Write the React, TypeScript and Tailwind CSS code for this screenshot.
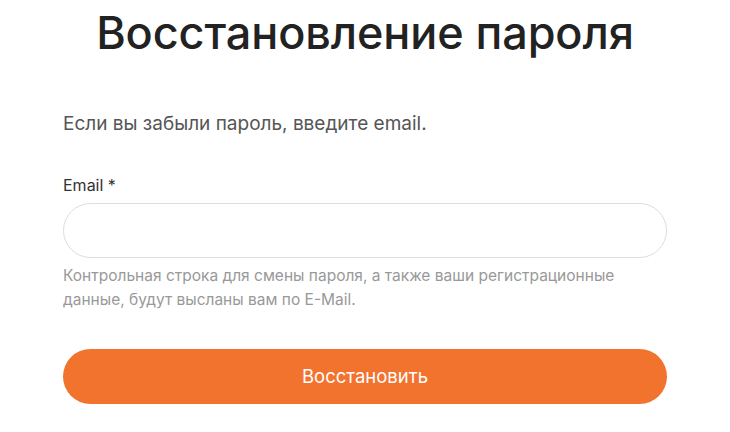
import React from "react";

export default function App() {
  return (
    <div className="w-[730px] h-[432px] bg-white overflow-hidden" style={{ fontFamily: "Inter, 'Noto Sans', sans-serif" }}>
      <div className="w-[604px] mx-auto">
        <h1 className="text-center text-[45px] leading-[66px] font-medium text-[#222222] tracking-[-0.1px]">
          Восстановление пароля
        </h1>
        <p className="mt-[45px] text-[19px] leading-[26px] text-[#555555]">
          Если вы забыли пароль, введите email.
        </p>
        <label className="block mt-[37px] text-[16px] leading-[22px] text-[#333333]">Email *</label>
        <input
          type="text"
          className="block mt-[7px] w-full h-[55px] rounded-full border border-[#dddddd] outline-none px-6"
        />
        <p className="mt-[6px] text-[15.5px] leading-[24px] text-[#999999]">
          Контрольная строка для смены пароля, а также ваши регистрационные данные, будут высланы вам по E-Mail.
        </p>
        <button className="mt-[37px] w-full h-[55px] rounded-full bg-[#f2732e] text-white text-[18.5px]">
          Восстановить
        </button>
      </div>
    </div>
  );
}
